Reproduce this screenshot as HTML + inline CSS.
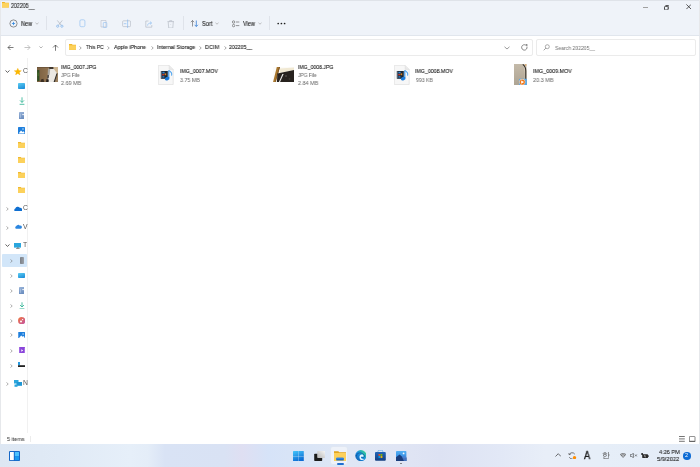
<!DOCTYPE html>
<html><head><meta charset="utf-8">
<style>
*{margin:0;padding:0;box-sizing:border-box}
html,body{width:700px;height:467px;overflow:hidden;background:#fff;font-family:"Liberation Sans",sans-serif;color:#1a1a1a}
.a{position:absolute}
.t{position:absolute;white-space:nowrap;font-size:6.2px;line-height:6.2px;transform:scaleX(0.86);transform-origin:0 0;will-change:transform;-webkit-text-stroke:0.1px currentColor}
#top{left:0;top:0;width:700px;height:35px;background:#eff3f9}
#win-l{left:0;top:0;width:1px;height:444px;background:#e6e8eb}
#win-r{left:699px;top:0;width:1px;height:444px;background:#e6e8eb}
#win-t{left:0;top:0;width:700px;height:1px;background:#dfe3e9}
.sep{position:absolute;width:1px;background:#dfe3ea}
.g{color:#6e6e6e;-webkit-text-stroke:0.05px currentColor}
#nav-b{left:27px;top:58px;width:1px;height:375px;background:#f1f1f1}
#taskbar{left:0;top:444px;width:700px;height:23px;background:linear-gradient(90deg,#dde7f3 0px,#e0eaf6 60px,#e6eff9 130px,#e4edf8 148px,#d9e3f5 165px,#d9e2f4 225px,#dfdff2 242px,#d6e3f8 268px,#dae5f6 310px,#dfe7f5 350px,#e0e5f4 400px,#dde2f3 440px,#e2e8f6 500px,#e8eef8 545px,#e6eef8 600px,#e4ecf7 700px)}
</style></head><body>
<div class="a" id="top"></div>
<div class="a" id="win-t"></div>
<div class="a" id="win-l"></div>
<div class="a" id="win-r"></div>
<div class="a" style="left:0;top:35px;width:700px;height:1px;background:#e1e6ed"></div>

<!-- title -->
<svg class="a" style="left:2.3px;top:2.3px" width="6.9" height="5.5" viewBox="0 0 6.9 5.5"><path d="M0 0h2.6l0.8 0.7h3.5V5.5H0z" fill="#efb42a"/><rect x="0" y="1.1" width="6.9" height="4.4" fill="#fdd35e"/></svg>
<div class="t" style="left:10.6px;top:2.9px;font-size:6.4px;line-height:6.4px;color:#222;transform:scaleX(0.83)">202205__</div>
<!-- window controls -->
<div class="a" style="left:642.5px;top:6.5px;width:5px;height:0.8px;background:#a0a0a0"></div>
<svg class="a" style="left:663.8px;top:4.5px" width="5.5" height="5.5" viewBox="0 0 5.5 5.5"><rect x="0.5" y="1.4" width="3.6" height="3.6" rx="0.8" fill="none" stroke="#333" stroke-width="0.9"/><path d="M1.5 0.5h2.6a0.9 0.9 0 0 1 0.9 0.9v2.6" fill="none" stroke="#333" stroke-width="0.8"/></svg>
<svg class="a" style="left:685.6px;top:4.4px" width="5.5" height="5.5" viewBox="0 0 5.5 5.5"><path d="M0.4 0.4L5.1 5.1M5.1 0.4L0.4 5.1" stroke="#2a2a2a" stroke-width="0.75"/></svg>

<!-- toolbar -->
<svg class="a" style="left:9.3px;top:18.8px" width="9" height="9" viewBox="0 0 9 9"><circle cx="4.5" cy="4.5" r="3.6" fill="none" stroke="#5a5a5a" stroke-width="0.65"/><path d="M4.5 2.9v3.2M2.9 4.5h3.2" stroke="#2f86e0" stroke-width="0.8"/></svg>
<div class="t" style="left:21.3px;top:20.7px;font-size:6.7px;line-height:6.7px;color:#222;transform:scaleX(0.83)">New</div>
<svg class="a" style="left:35px;top:22px" width="4" height="3" viewBox="0 0 4 3"><path d="M0.5 0.8L2 2.2L3.5 0.8" fill="none" stroke="#999" stroke-width="0.6"/></svg>
<div class="sep" style="left:46px;top:16px;height:14px"></div>
<!-- cut -->
<svg class="a" style="left:55.5px;top:19.6px" width="8" height="8" viewBox="0 0 8 8"><path d="M1.3 0.4L5.3 5.4M6.3 0.4L2.3 5.4" stroke="#a3a9b2" stroke-width="0.6" fill="none"/><circle cx="1.7" cy="6.2" r="1.1" fill="none" stroke="#7db2ea" stroke-width="0.7"/><circle cx="5.9" cy="6.2" r="1.1" fill="none" stroke="#7db2ea" stroke-width="0.7"/></svg>
<!-- copy -->
<svg class="a" style="left:78.5px;top:19.3px" width="7" height="8.5" viewBox="0 0 7 8.5"><rect x="0.9" y="0.8" width="5" height="6.9" rx="1.3" fill="none" stroke="#9fc8f2" stroke-width="0.8"/></svg>
<!-- paste -->
<svg class="a" style="left:100px;top:19px" width="8" height="9" viewBox="0 0 8 9"><path d="M1 1.5h5v6.5H1z" fill="none" stroke="#b8bec7" stroke-width="0.6"/><rect x="3.3" y="3.5" width="3.5" height="5" rx="0.6" fill="none" stroke="#8fbef0" stroke-width="0.6"/></svg>
<!-- rename -->
<svg class="a" style="left:121.5px;top:19px" width="9.5" height="9.5" viewBox="0 0 9.5 9.5"><rect x="0.6" y="1.8" width="8" height="5.8" rx="1" fill="none" stroke="#b3b9c2" stroke-width="0.65"/><path d="M5.6 0.5v8.5M1.8 4.7h2.6" stroke="#86b9ef" stroke-width="0.65"/></svg>
<!-- share -->
<svg class="a" style="left:144.6px;top:19.6px" width="8" height="8" viewBox="0 0 8 8"><path d="M3.5 1H0.8V7.2H6.8V5" fill="none" stroke="#b3b9c2" stroke-width="0.65"/><path d="M2.6 5.6C2.6 3.8 3.8 3 6.4 3M5 1.6L6.6 3L5 4.4" fill="none" stroke="#86b9ef" stroke-width="0.65"/></svg>
<!-- delete -->
<svg class="a" style="left:167px;top:19.6px" width="7.5" height="8.5" viewBox="0 0 7.5 8.5"><path d="M0.5 1.6h6.5M2.6 1.6V0.7h2.3v0.9M1.2 1.6l0.5 6.4h4.1L6.3 1.6" fill="none" stroke="#b3b9c2" stroke-width="0.65"/><circle cx="3.75" cy="4.6" r="0.45" fill="#c3c8cf"/></svg>
<div class="sep" style="left:183px;top:16px;height:14px"></div>
<!-- sort -->
<svg class="a" style="left:190px;top:19px" width="9" height="9" viewBox="0 0 9 9"><path d="M2.5 7.5V1.5M0.8 3.2L2.5 1.5L4.2 3.2" fill="none" stroke="#555" stroke-width="0.6"/><path d="M6.3 1.5v6M4.6 5.8l1.7 1.7L8 5.8" fill="none" stroke="#1d6fd0" stroke-width="0.7"/></svg>
<div class="t" style="left:201.6px;top:20.7px;font-size:6.7px;line-height:6.7px;color:#222;transform:scaleX(0.85)">Sort</div>
<svg class="a" style="left:215px;top:22px" width="4" height="3" viewBox="0 0 4 3"><path d="M0.5 0.8L2 2.2L3.5 0.8" fill="none" stroke="#999" stroke-width="0.6"/></svg>
<!-- view -->
<svg class="a" style="left:231.5px;top:19.5px" width="8" height="8" viewBox="0 0 8 8"><circle cx="1.6" cy="2" r="1.2" fill="none" stroke="#555" stroke-width="0.6"/><circle cx="1.6" cy="5.6" r="1.2" fill="none" stroke="#555" stroke-width="0.6"/><path d="M4 2h3.3M4 5.6h3.3" stroke="#555" stroke-width="0.6"/></svg>
<div class="t" style="left:242.5px;top:20.7px;font-size:6.7px;line-height:6.7px;color:#222;transform:scaleX(0.83)">View</div>
<svg class="a" style="left:257.5px;top:22px" width="4" height="3" viewBox="0 0 4 3"><path d="M0.5 0.8L2 2.2L3.5 0.8" fill="none" stroke="#999" stroke-width="0.6"/></svg>
<div class="sep" style="left:269px;top:16px;height:14px"></div>
<svg class="a" style="left:276.5px;top:22px" width="9" height="3" viewBox="0 0 9 3"><circle cx="1.2" cy="1.5" r="0.85" fill="#1e1e1e"/><circle cx="4.4" cy="1.5" r="0.85" fill="#1e1e1e"/><circle cx="7.6" cy="1.5" r="0.85" fill="#1e1e1e"/></svg>

<!-- address row -->
<svg class="a" style="left:7px;top:44px" width="7" height="7" viewBox="0 0 7 7"><path d="M6.5 3.5H1M3.5 1L1 3.5L3.5 6" fill="none" stroke="#444" stroke-width="0.7"/></svg>
<svg class="a" style="left:24px;top:44px" width="7" height="7" viewBox="0 0 7 7"><path d="M0.5 3.5H6M3.5 1L6 3.5L3.5 6" fill="none" stroke="#aaa" stroke-width="0.7"/></svg>
<svg class="a" style="left:38.8px;top:46px" width="4" height="2.6" viewBox="0 0 4 2.6"><path d="M0.4 0.4L2 2L3.6 0.4" fill="none" stroke="#777" stroke-width="0.55"/></svg>
<svg class="a" style="left:52px;top:44px" width="7" height="7" viewBox="0 0 7 7"><path d="M3.5 6.8V1M1 3.5L3.5 1L6 3.5" fill="none" stroke="#444" stroke-width="0.7"/></svg>
<div class="a" style="left:65px;top:39px;width:468px;height:17px;border:1px solid #ebebeb;border-radius:2px;background:#fff"></div>
<svg class="a" style="left:68.6px;top:44px" width="7.4" height="5.9" viewBox="0 0 7.4 5.9"><path d="M0 0h2.8l0.9 0.8h3.7V5.9H0z" fill="#f0b92e"/><rect x="0" y="1.3" width="7.4" height="4.6" fill="#fcd15b"/></svg>
<svg class="a" style="left:79.3px;top:45.5px" width="3" height="4" viewBox="0 0 3 4"><path d="M0.6 0.4L2.2 2L0.6 3.6" fill="none" stroke="#555" stroke-width="0.55"/></svg>
<div class="t" style="left:85.6px;top:44.00px;color:#222;transform:scaleX(0.801)">This PC</div>
<svg class="a" style="left:107.3px;top:45.5px" width="3" height="4" viewBox="0 0 3 4"><path d="M0.6 0.4L2.2 2L0.6 3.6" fill="none" stroke="#555" stroke-width="0.55"/></svg>
<div class="t" style="left:113.5px;top:44.00px;color:#222;transform:scaleX(0.870)">Apple iPhone</div>
<svg class="a" style="left:150.7px;top:45.5px" width="3" height="4" viewBox="0 0 3 4"><path d="M0.6 0.4L2.2 2L0.6 3.6" fill="none" stroke="#555" stroke-width="0.55"/></svg>
<div class="t" style="left:156.5px;top:44.00px;color:#222;transform:scaleX(0.870)">Internal Storage</div>
<svg class="a" style="left:199px;top:45.5px" width="3" height="4" viewBox="0 0 3 4"><path d="M0.6 0.4L2.2 2L0.6 3.6" fill="none" stroke="#555" stroke-width="0.55"/></svg>
<div class="t" style="left:205.3px;top:44.00px;color:#222;transform:scaleX(0.900)">DCIM</div>
<svg class="a" style="left:223.7px;top:45.5px" width="3" height="4" viewBox="0 0 3 4"><path d="M0.6 0.4L2.2 2L0.6 3.6" fill="none" stroke="#555" stroke-width="0.55"/></svg>
<div class="t" style="left:229.3px;top:44.00px;color:#222;transform:scaleX(0.840)">202205__</div>
<svg class="a" style="left:504px;top:45.5px" width="6" height="4" viewBox="0 0 6 4"><path d="M0.5 0.8L3 3L5.5 0.8" fill="none" stroke="#555" stroke-width="0.6"/></svg>
<svg class="a" style="left:520.5px;top:43.8px" width="7" height="7.2" viewBox="0 0 7 7.2"><path d="M4.85 1.2A2.7 2.7 0 1 0 5.95 2.75" fill="none" stroke="#4a4a4a" stroke-width="0.65"/><path d="M4.6 0.2L6.5 0.5L6.1 2.4z" fill="#4a4a4a"/></svg>
<div class="a" style="left:536px;top:39px;width:160px;height:17px;border:1px solid #ebebeb;border-radius:2px;background:#fff"></div>
<svg class="a" style="left:542.5px;top:44px" width="7" height="7" viewBox="0 0 7 7"><circle cx="4.3" cy="2.7" r="2" fill="none" stroke="#777" stroke-width="0.6"/><path d="M2.9 4.1L0.7 6.3" stroke="#777" stroke-width="0.7"/></svg>
<div class="t" style="left:555.3px;top:44.60px;color:#707070;transform:scaleX(0.820);-webkit-text-stroke:0">Search 202205__</div>

<!-- nav pane -->
<div class="a" id="nav-b"></div>
<!-- quick access -->
<svg class="a" style="left:5px;top:69.8px" width="5" height="3" viewBox="0 0 5 3"><path d="M0.5 0.5L2.5 2.4L4.5 0.5" fill="none" stroke="#444" stroke-width="0.85"/></svg>
<svg class="a" style="left:14.2px;top:67.8px" width="7.6" height="7.2" viewBox="0 0 8 7.4"><path d="M4 0.1L5.1 2.6L7.8 2.8L5.7 4.5L6.4 7.2L4 5.7L1.6 7.2L2.3 4.5L0.2 2.8L2.9 2.6z" fill="#fbb900" stroke="#f5a800" stroke-width="0.3" stroke-linejoin="round"/></svg>
<div class="t" style="left:22.5px;top:67.50px;color:#555;width:5px;overflow:hidden;font-size:6.8px;line-height:6.8px;transform:none;-webkit-text-stroke:0">C</div>
<!-- desktop -->
<div class="a" style="left:18px;top:83px;width:7px;height:6px;background:linear-gradient(160deg,#5ccdf2,#1788d6);border-radius:0.8px"></div>
<!-- downloads -->
<svg class="a" style="left:19px;top:97px" width="6" height="8" viewBox="0 0 6 8"><path d="M3 0.3V5.4M1 3.4L3 5.4L5 3.4M0.6 7.3H5.4" fill="none" stroke="#27b08f" stroke-width="0.8"/></svg>
<!-- documents -->
<svg class="a" style="left:18.8px;top:111.8px" width="5.5" height="7.3" viewBox="0 0 5.5 7.3"><defs><linearGradient id="dg111" x1="0" y1="0" x2="0.3" y2="1"><stop offset="0" stop-color="#98b3d8"/><stop offset="1" stop-color="#6d8fc0"/></linearGradient></defs><rect width="5.5" height="7.3" rx="0.4" fill="url(#dg111)"/><rect x="1.4" y="1.8" width="0.6" height="4" fill="#b9cde8"/><rect x="3.3" y="2" width="1.6" height="1.1" fill="#eef3fa"/></svg>
<!-- pictures -->
<svg class="a" style="left:18px;top:127px" width="7" height="7" viewBox="0 0 7 7"><rect width="7" height="7" rx="0.6" fill="#1f7fdc"/><path d="M0.6 6.4L3 3.6L4.6 5L5.5 4.2L6.4 5.2V6.4z" fill="#fff"/><circle cx="5" cy="2" r="0.8" fill="#bfe3ff"/></svg>
<!-- folders -->
<svg class="a" style="left:18px;top:142px" width="7.4" height="6.2" viewBox="0 0 7.4 6.2"><path d="M0 0h2.7l0.8 0.8h3.9V6.2H0z" fill="#f0b92e"/><rect y="1.2" width="7.4" height="5" fill="#fcd15b"/></svg>
<svg class="a" style="left:18px;top:157px" width="7.4" height="6.2" viewBox="0 0 7.4 6.2"><path d="M0 0h2.7l0.8 0.8h3.9V6.2H0z" fill="#f0b92e"/><rect y="1.2" width="7.4" height="5" fill="#fcd15b"/></svg>
<svg class="a" style="left:18px;top:172px" width="7.4" height="6.2" viewBox="0 0 7.4 6.2"><path d="M0 0h2.7l0.8 0.8h3.9V6.2H0z" fill="#f0b92e"/><rect y="1.2" width="7.4" height="5" fill="#fcd15b"/></svg>
<svg class="a" style="left:18px;top:186.6px" width="7.4" height="6.2" viewBox="0 0 7.4 6.2"><path d="M0 0h2.7l0.8 0.8h3.9V6.2H0z" fill="#f0b92e"/><rect y="1.2" width="7.4" height="5" fill="#fcd15b"/></svg>
<!-- onedrive 1 -->
<svg class="a" style="left:6px;top:207px" width="3" height="4" viewBox="0 0 3 4"><path d="M0.6 0.4L2.2 2L0.6 3.6" fill="none" stroke="#6f6f6f" stroke-width="0.6"/></svg>
<svg class="a" style="left:13.7px;top:205.5px" width="8.3" height="5.5" viewBox="0 0 8.3 5.5"><path d="M1.5 5.5A1.5 1.5 0 0 1 1.3 2.6A2.6 2.6 0 0 1 5.8 1.8A1.9 1.9 0 0 1 8.2 3.7A1.8 1.8 0 0 1 6.6 5.5z" fill="#0f6fd1"/></svg>
<div class="t" style="left:22.5px;top:205.00px;color:#555;width:5px;overflow:hidden;font-size:6.8px;line-height:6.8px;transform:none;-webkit-text-stroke:0">C</div>
<!-- onedrive 2 -->
<svg class="a" style="left:6px;top:225.5px" width="3" height="4" viewBox="0 0 3 4"><path d="M0.6 0.4L2.2 2L0.6 3.6" fill="none" stroke="#6f6f6f" stroke-width="0.6"/></svg>
<svg class="a" style="left:14.5px;top:224px" width="7" height="5" viewBox="0 0 8.3 5.5"><path d="M1.5 5.5A1.5 1.5 0 0 1 1.3 2.6A2.6 2.6 0 0 1 5.8 1.8A1.9 1.9 0 0 1 8.2 3.7A1.8 1.8 0 0 1 6.6 5.5z" fill="#2b86e0"/></svg>
<div class="t" style="left:22.5px;top:223.50px;color:#555;width:5px;overflow:hidden;font-size:6.8px;line-height:6.8px;transform:none;-webkit-text-stroke:0">V</div>
<!-- this pc -->
<svg class="a" style="left:5px;top:244.3px" width="5" height="3" viewBox="0 0 5 3"><path d="M0.5 0.5L2.5 2.4L4.5 0.5" fill="none" stroke="#444" stroke-width="0.85"/></svg>
<svg class="a" style="left:13.7px;top:242.8px" width="7.7" height="6" viewBox="0 0 7.7 6"><rect width="7.7" height="4.6" fill="#2aa6dd"/><rect x="3" y="4.6" width="1.7" height="0.8" fill="#555"/><rect x="2" y="5.3" width="3.7" height="0.7" fill="#777"/></svg>
<div class="t" style="left:22.5px;top:242.00px;color:#555;width:5px;overflow:hidden;font-size:6.8px;line-height:6.8px;transform:none;-webkit-text-stroke:0">T</div>
<!-- selected iphone -->
<div class="a" style="left:2px;top:254px;width:24.5px;height:12.5px;background:#d2e6f9;border-radius:1px"></div>
<svg class="a" style="left:9.5px;top:259px" width="3" height="4" viewBox="0 0 3 4"><path d="M0.6 0.4L2.2 2L0.6 3.6" fill="none" stroke="#6f6f6f" stroke-width="0.6"/></svg>
<div class="a" style="left:19.8px;top:256.5px;width:4px;height:7.7px;background:linear-gradient(90deg,#7a7f86,#9aa0a8);border-radius:0.8px"></div>
<!-- children -->
<svg class="a" style="left:9.5px;top:274px" width="3" height="4" viewBox="0 0 3 4"><path d="M0.6 0.4L2.2 2L0.6 3.6" fill="none" stroke="#6f6f6f" stroke-width="0.6"/></svg>
<div class="a" style="left:18px;top:273.2px;width:7.3px;height:5.2px;background:linear-gradient(160deg,#5ccdf2,#1788d6);border-radius:0.8px"></div>
<svg class="a" style="left:9.5px;top:288.5px" width="3" height="4" viewBox="0 0 3 4"><path d="M0.6 0.4L2.2 2L0.6 3.6" fill="none" stroke="#6f6f6f" stroke-width="0.6"/></svg>
<svg class="a" style="left:18.8px;top:287.2px" width="5.5" height="7.3" viewBox="0 0 5.5 7.3"><defs><linearGradient id="dg287" x1="0" y1="0" x2="0.3" y2="1"><stop offset="0" stop-color="#98b3d8"/><stop offset="1" stop-color="#6d8fc0"/></linearGradient></defs><rect width="5.5" height="7.3" rx="0.4" fill="url(#dg287)"/><rect x="1.4" y="1.8" width="0.6" height="4" fill="#b9cde8"/><rect x="3.3" y="2" width="1.6" height="1.1" fill="#eef3fa"/></svg>
<svg class="a" style="left:9.5px;top:303.5px" width="3" height="4" viewBox="0 0 3 4"><path d="M0.6 0.4L2.2 2L0.6 3.6" fill="none" stroke="#6f6f6f" stroke-width="0.6"/></svg>
<svg class="a" style="left:19px;top:301.8px" width="6" height="7.5" viewBox="0 0 6 7.5"><path d="M3 0.3V5M1 3L3 5L5 3M0.6 6.9H5.4" fill="none" stroke="#27b08f" stroke-width="0.8"/></svg>
<svg class="a" style="left:9.5px;top:318.5px" width="3" height="4" viewBox="0 0 3 4"><path d="M0.6 0.4L2.2 2L0.6 3.6" fill="none" stroke="#6f6f6f" stroke-width="0.6"/></svg>
<svg class="a" style="left:18px;top:317px" width="7.3" height="7.3" viewBox="0 0 7.3 7.3"><defs><linearGradient id="mg" x1="0" y1="0" x2="1" y2="1"><stop offset="0" stop-color="#f2793a"/><stop offset="1" stop-color="#c150a8"/></linearGradient></defs><circle cx="3.65" cy="3.65" r="3.65" fill="url(#mg)"/><circle cx="3" cy="4.6" r="1" fill="#fff"/><circle cx="4.6" cy="2.6" r="0.7" fill="#fff"/></svg>
<svg class="a" style="left:9.5px;top:333px" width="3" height="4" viewBox="0 0 3 4"><path d="M0.6 0.4L2.2 2L0.6 3.6" fill="none" stroke="#6f6f6f" stroke-width="0.6"/></svg>
<svg class="a" style="left:18px;top:331.7px" width="7.3" height="6.8" viewBox="0 0 7 7"><rect width="7" height="7" rx="0.6" fill="#1f7fdc"/><path d="M0.6 6.4L3 3.6L4.6 5L5.5 4.2L6.4 5.2V6.4z" fill="#fff"/><circle cx="5" cy="2" r="0.8" fill="#bfe3ff"/></svg>
<svg class="a" style="left:9.5px;top:348.5px" width="3" height="4" viewBox="0 0 3 4"><path d="M0.6 0.4L2.2 2L0.6 3.6" fill="none" stroke="#6f6f6f" stroke-width="0.6"/></svg>
<svg class="a" style="left:18.5px;top:346.6px" width="6.3" height="6.9" viewBox="0 0 6.3 6.9"><rect width="6.3" height="6.9" rx="0.6" fill="#8a45d9"/><rect x="0.5" y="0.6" width="0.6" height="5.7" fill="#b98af0"/><rect x="5.2" y="0.6" width="0.6" height="5.7" fill="#b98af0"/><path d="M2.3 2.2L4.2 3.45L2.3 4.7z" fill="#fff"/></svg>
<svg class="a" style="left:9.5px;top:363.5px" width="3" height="4" viewBox="0 0 3 4"><path d="M0.6 0.4L2.2 2L0.6 3.6" fill="none" stroke="#6f6f6f" stroke-width="0.6"/></svg>
<svg class="a" style="left:18px;top:361.5px" width="7.3" height="5.3" viewBox="0 0 7.3 5.3"><rect x="0" y="0" width="2" height="3" fill="#2a9be0"/><rect x="0" y="3.2" width="7.3" height="2.1" fill="#222"/></svg>
<!-- network -->
<svg class="a" style="left:6px;top:382px" width="3" height="4" viewBox="0 0 3 4"><path d="M0.6 0.4L2.2 2L0.6 3.6" fill="none" stroke="#6f6f6f" stroke-width="0.6"/></svg>
<svg class="a" style="left:14px;top:379.8px" width="8" height="6.8" viewBox="0 0 8 6.8"><rect x="0" y="0" width="4.5" height="3.5" fill="#2aa6dd"/><rect x="2.5" y="2" width="5.5" height="3.8" fill="#1e96d4"/><rect x="0.5" y="4.5" width="3" height="2.3" fill="#2aa6dd"/></svg>
<div class="t" style="left:22.5px;top:380.00px;color:#555;width:5px;overflow:hidden;font-size:6.8px;line-height:6.8px;transform:none;-webkit-text-stroke:0">N</div>

<!-- content items -->
<!-- 1 -->
<svg class="a" style="left:37px;top:67px" width="21" height="15" viewBox="0 0 21 15"><defs><linearGradient id="wd" x1="0" y1="0" x2="1" y2="0"><stop offset="0" stop-color="#7a5f40"/><stop offset="0.5" stop-color="#8f7250"/><stop offset="1" stop-color="#9a8060"/></linearGradient></defs><rect width="21" height="15" fill="url(#wd)"/><rect x="0" y="0" width="21" height="0.8" fill="#6a5238"/><rect x="0.2" y="3" width="2.2" height="11" fill="#2f4f25"/><rect x="0.6" y="5.5" width="1" height="3.5" fill="#4c7532"/><rect x="16" y="0" width="5" height="6" fill="#cdb591"/><path d="M12 1.5h4.5l3.5 4.8l-2.4 8.7H10.6l0.2-6z" fill="#ebe8e3"/><path d="M11 1.6l2.2 0.3l-0.6 6l-2 1.4z" fill="#a9a49c"/><rect x="12.2" y="0.3" width="4.3" height="1.6" fill="#2e2a26"/><path d="M19.6 6.2L20.4 6.8L17.8 15H16.6z" fill="#2a2622"/><path d="M10.5 8l1.5 0.2l-0.4 3l-1.3 0.3z" fill="#3a3430"/><path d="M4 12.4l2.4-0.6l0.8 3.2H3.6z" fill="#3b2e22"/><path d="M9.5 12l2.3 0.6l-0.2 2.4H9z" fill="#28221e"/></svg>
<div class="t" style="left:60.9px;top:63.70px;color:#161616;transform:scaleX(0.830)">IMG_0007.JPG</div>
<div class="t g" style="left:61.2px;top:72.10px;transform:scaleX(0.790)">JPG File</div>
<div class="t g" style="left:61px;top:80.20px;transform:scaleX(0.880)">2.69 MB</div>
<!-- 2 -->
<svg class="a" style="left:157.8px;top:64.8px" width="16" height="20.2" viewBox="0 0 16 20.2"><path d="M0.4 0.4H11.2L15.2 4.4V19.6H0.4z" fill="#f7f7f7" stroke="#dadada" stroke-width="0.6"/><path d="M11.2 0.4V4.4H15.2" fill="#e9e9e9" stroke="#dadada" stroke-width="0.5"/><rect x="2.8" y="6" width="7" height="7.8" fill="#1b2836"/><rect x="3.2" y="6.3" width="0.7" height="7.2" fill="#6b7d90"/><rect x="4.4" y="6.8" width="2.2" height="1.6" fill="#3a8ad6"/><rect x="4.2" y="9" width="1.8" height="1.4" fill="#c8342a"/><rect x="6.6" y="8.4" width="1.6" height="1.8" fill="#e0801c"/><rect x="4.4" y="11.2" width="2" height="1.4" fill="#2f7fc8"/><path d="M10.8 5.4V13" stroke="#1f86e2" stroke-width="1"/><path d="M10.8 5.5C12.8 6.5 14.3 8.3 13.5 10.6" fill="none" stroke="#58a9f0" stroke-width="1.1"/><ellipse cx="9.2" cy="13.6" rx="2.4" ry="1.8" transform="rotate(-20 9.2 13.6)" fill="#1a7ad8"/></svg>
<div class="t" style="left:179.5px;top:67.90px;color:#161616;transform:scaleX(0.849)">IMG_0007.MOV</div>
<div class="t g" style="left:179.7px;top:76.70px;transform:scaleX(0.860)">3.75 MB</div>
<!-- 3 -->
<svg class="a" style="left:273px;top:66.8px" width="21" height="15.2" viewBox="0 0 21 15.2"><rect width="21" height="15.2" fill="#fcfbf8"/><path d="M7 1.5L21 0.5V3L7 6z" fill="#f1e9d3"/><path d="M3.8 0h3.2L2.6 15.2H0z" fill="#a9782f"/><path d="M6 0h1L2.6 15.2H2z" fill="#7a5020"/><path d="M4.4 6.5L21 2.9V15.2H3.9z" fill="#27221e"/><path d="M9.4 7h1.2L7 15.2H5.8z" fill="#ecebe8"/><circle cx="13" cy="9" r="1.1" fill="#4a4440"/><circle cx="16.5" cy="12" r="0.9" fill="#3c3632"/></svg>
<div class="t" style="left:297.6px;top:63.70px;color:#161616;transform:scaleX(0.830)">IMG_0008.JPG</div>
<div class="t g" style="left:297.9px;top:72.10px;transform:scaleX(0.790)">JPG File</div>
<div class="t g" style="left:297.8px;top:80.20px;transform:scaleX(0.880)">2.84 MB</div>
<!-- 4 -->
<svg class="a" style="left:394.1px;top:64.8px" width="16" height="20.2" viewBox="0 0 16 20.2"><path d="M0.4 0.4H11.2L15.2 4.4V19.6H0.4z" fill="#f7f7f7" stroke="#dadada" stroke-width="0.6"/><path d="M11.2 0.4V4.4H15.2" fill="#e9e9e9" stroke="#dadada" stroke-width="0.5"/><rect x="2.8" y="6" width="7" height="7.8" fill="#1b2836"/><rect x="3.2" y="6.3" width="0.7" height="7.2" fill="#6b7d90"/><rect x="4.4" y="6.8" width="2.2" height="1.6" fill="#3a8ad6"/><rect x="4.2" y="9" width="1.8" height="1.4" fill="#c8342a"/><rect x="6.6" y="8.4" width="1.6" height="1.8" fill="#e0801c"/><rect x="4.4" y="11.2" width="2" height="1.4" fill="#2f7fc8"/><path d="M10.8 5.4V13" stroke="#1f86e2" stroke-width="1"/><path d="M10.8 5.5C12.8 6.5 14.3 8.3 13.5 10.6" fill="none" stroke="#58a9f0" stroke-width="1.1"/><ellipse cx="9.2" cy="13.6" rx="2.4" ry="1.8" transform="rotate(-20 9.2 13.6)" fill="#1a7ad8"/></svg>
<div class="t" style="left:415.4px;top:67.90px;color:#161616;transform:scaleX(0.849)">IMG_0008.MOV</div>
<div class="t g" style="left:415.6px;top:76.70px;transform:scaleX(0.830)">993 KB</div>
<!-- 5 -->
<svg class="a" style="left:513.8px;top:63.9px" width="13.4" height="21.4" viewBox="0 0 13.4 21.4"><defs><linearGradient id="bg5" x1="0" y1="0" x2="0" y2="1"><stop offset="0" stop-color="#c4baa9"/><stop offset="1" stop-color="#aea493"/></linearGradient></defs><rect width="12.4" height="21" fill="url(#bg5)"/><path d="M8.6 0h3.8v18h-1.8C11 12 11.2 5 8.6 0z" fill="#d9cfbf"/><path d="M8.8 0.4C11 2 11.8 4 11.8 7V17" fill="none" stroke="#2f2a24" stroke-width="1.1"/><rect x="11" y="0" width="1.4" height="2" fill="#d8b080"/><rect x="4.9" y="14.7" width="8.3" height="6.6" rx="1" fill="#62a9e0"/><circle cx="8.3" cy="18.1" r="3" fill="#fbe8d6"/><circle cx="8.3" cy="18.1" r="2.6" fill="#f07718"/><path d="M7.2 16.5L10.1 18.1L7.2 19.7z" fill="#fff"/></svg>
<div class="t" style="left:533.1px;top:67.90px;color:#161616;transform:scaleX(0.870)">IMG_0009.MOV</div>
<div class="t g" style="left:533.3px;top:76.70px;transform:scaleX(0.890)">20.3 MB</div>

<!-- status bar -->
<div class="t" style="left:6.8px;top:436.10px;color:#3a3a3a;transform:scaleX(0.880);-webkit-text-stroke:0.05px currentColor">5 items</div>
<div class="sep" style="left:30px;top:435.5px;height:6px;background:#ececec"></div>
<svg class="a" style="left:678.8px;top:436px" width="6" height="6" viewBox="0 0 6 6"><path d="M0 0.5h5.8M0 2.9h5.8M0 5.3h5.8" stroke="#5c5c5c" stroke-width="0.85"/></svg>
<svg class="a" style="left:689px;top:435.5px" width="6.5" height="6.5" viewBox="0 0 6.5 6.5"><rect x="0.4" y="0.4" width="5.6" height="5.6" rx="0.7" fill="none" stroke="#555" stroke-width="0.7"/><rect x="0.4" y="4.8" width="5.6" height="1.2" fill="#666"/></svg>

<!-- taskbar -->
<div class="a" id="taskbar"></div>
<!-- widgets -->
<svg class="a" style="left:9px;top:450.7px" width="11" height="10.1" viewBox="0 0 11 10.1"><rect width="11" height="10.1" rx="1" fill="#1668c7"/><rect x="1" y="1" width="3.8" height="8.1" fill="#fff"/><rect x="5.8" y="1" width="4.2" height="4" fill="#4cc2ff"/><rect x="5.8" y="5.1" width="4.2" height="4" fill="#1a9af0"/></svg>
<!-- start -->
<svg class="a" style="left:293.4px;top:450.6px" width="10.8" height="10.5" viewBox="0 0 10.8 10.5"><defs><linearGradient id="wg" x1="0" y1="0" x2="0.4" y2="1"><stop offset="0" stop-color="#46c6fa"/><stop offset="1" stop-color="#0b6cd4"/></linearGradient></defs><rect width="10.8" height="10.5" rx="0.5" fill="url(#wg)"/><rect x="5.1" y="0" width="0.6" height="10.5" fill="#dfe7f4" opacity="0.55"/><rect x="0" y="5" width="10.8" height="0.6" fill="#dfe7f4" opacity="0.55"/></svg>
<!-- task view -->
<svg class="a" style="left:313.8px;top:450.6px" width="11.5" height="10.2" viewBox="0 0 11.5 10.2"><defs><linearGradient id="tg" x1="1" y1="0" x2="0" y2="1"><stop offset="0" stop-color="#f6f6f6"/><stop offset="1" stop-color="#b5b5b5"/></linearGradient></defs><rect x="0.2" y="2.7" width="8" height="7.3" rx="0.7" fill="#1c1c1c"/><rect x="3.2" y="0.1" width="8.1" height="6.9" rx="0.7" fill="url(#tg)"/></svg>
<!-- explorer active -->
<div class="a" style="left:331.2px;top:447.2px;width:16px;height:17.2px;background:#eef2f9;border-radius:2px;box-shadow:0 0 0 0.5px #e3e8f0"></div>
<svg class="a" style="left:334.2px;top:450.8px" width="12" height="10.6" viewBox="0 0 12 10.6"><path d="M0 0.3h4.3l1 1H12V10.6H0z" fill="#e0a21a"/><rect x="0" y="1.9" width="12" height="8.7" fill="#fdd05a"/><rect x="2.2" y="6.7" width="7.6" height="2.9" rx="0.9" fill="#1a6fd0"/><rect x="2.2" y="6.7" width="7.6" height="1.1" rx="0.5" fill="#3c8ee6"/></svg>
<div class="a" style="left:336.6px;top:463.2px;width:7.4px;height:1.8px;background:#1f6fd0;border-radius:1px"></div>
<!-- edge -->
<svg class="a" style="left:354.6px;top:450.1px" width="11.8" height="11.2" viewBox="0 0 11.8 11.2"><defs><linearGradient id="eg" x1="0" y1="1" x2="1" y2="0"><stop offset="0" stop-color="#0d56a8"/><stop offset="0.5" stop-color="#1a8fe0"/><stop offset="0.8" stop-color="#2fc3a0"/><stop offset="1" stop-color="#5fdc5a"/></linearGradient></defs><circle cx="5.9" cy="5.6" r="5.6" fill="url(#eg)"/><path d="M1 6.5C1.5 3.5 4 2.5 6 3s3.5 1.8 3.5 3.2c0 0.9-0.9 1.2-2 1.1C6 7.2 5.2 6.8 5.6 6" fill="none" stroke="#0a3f86" stroke-width="0.9" opacity="0.6"/><path d="M4.5 6.8c0-1.5 1-2.4 2.2-2.4c1.1 0 1.9 0.7 1.9 1.5c0 0.6-0.6 0.8-1.3 0.8c-1 0-1.4-0.3-1.3 0.6c0.1 1.2 1.4 2 3.3 1.6c-0.9 1-2.5 1.3-3.6 0.8c-0.9-0.5-1.2-1.3-1.2-2.9z" fill="#e9f6ff"/></svg>
<!-- store -->
<svg class="a" style="left:375.3px;top:450.4px" width="10.8" height="10.8" viewBox="0 0 10.8 10.8"><defs><linearGradient id="sg" x1="0" y1="0" x2="0" y2="1"><stop offset="0" stop-color="#2366b8"/><stop offset="1" stop-color="#143f80"/></linearGradient></defs><path d="M3 2.2V1.3C3 0.6 3.5 0.2 4.2 0.2h2.4c0.7 0 1.2 0.4 1.2 1.1v0.9" fill="none" stroke="#6db4ee" stroke-width="0.9"/><rect x="0" y="2" width="10.8" height="8.8" rx="1" fill="url(#sg)"/><rect x="3.5" y="4" width="1.8" height="1.8" fill="#f25022"/><rect x="5.6" y="4" width="1.8" height="1.8" fill="#7fba00"/><rect x="3.5" y="6.1" width="1.8" height="1.8" fill="#00a4ef"/><rect x="5.6" y="6.1" width="1.8" height="1.8" fill="#ffb900"/></svg>
<!-- photos -->
<svg class="a" style="left:396.2px;top:450.8px" width="10.4" height="10.2" viewBox="0 0 10.4 10.2"><defs><linearGradient id="pg" x1="0" y1="0" x2="0" y2="1"><stop offset="0" stop-color="#52b0f4"/><stop offset="1" stop-color="#2477d8"/></linearGradient></defs><rect width="10.4" height="10.2" rx="0.8" fill="url(#pg)"/><path d="M0 10.2V6.3L3.6 3.6L8 7.6L10.4 6.4V10.2z" fill="#1a3d7c"/><path d="M6 6L8 4.6L10.4 6.4V10.2H8z" fill="#4f7fd0" opacity="0.8"/><circle cx="7.6" cy="2.4" r="0.9" fill="#f4fbff"/></svg>
<div class="a" style="left:400px;top:463px;width:2px;height:1.2px;background:#777;border-radius:1px"></div>
<!-- tray -->
<svg class="a" style="left:554.7px;top:453px" width="6.5" height="4" viewBox="0 0 6.5 4"><path d="M0.5 3.5L3.25 0.7L6 3.5" fill="none" stroke="#333" stroke-width="0.7"/></svg>
<svg class="a" style="left:568.2px;top:451.6px" width="8.5" height="7.6" viewBox="0 0 8.5 7.6"><path d="M6.8 2.2A3.2 3.2 0 0 0 1.2 2.6M0.8 1.2L1.2 2.6L2.6 2.4M1.3 5.2A3.2 3.2 0 0 0 4.6 7" fill="none" stroke="#4a4a4a" stroke-width="0.75"/><circle cx="6.5" cy="5.6" r="1.7" fill="#ff8c00"/></svg>
<div class="t" style="left:583.9px;top:450.9px;font-size:10px;line-height:10px;color:#1e1e1e;letter-spacing:0;transform:scaleX(0.92);-webkit-text-stroke:0.35px currentColor">A</div>
<div class="t" style="left:601.6px;top:451.9px;font-size:7.6px;line-height:8.6px;color:#505050;letter-spacing:0;transform:none;-webkit-text-stroke:0">한</div>
<svg class="a" style="left:619.8px;top:453.2px" width="6.2" height="4.8" viewBox="0 0 6.2 4.8"><path d="M0.3 1.4A4.2 4.2 0 0 1 5.9 1.4L3.1 4.5z" fill="#c9ccd2" stroke="#3a3a3a" stroke-width="0.55" stroke-linejoin="round"/><path d="M1.3 2.5A2.6 2.6 0 0 1 4.9 2.5" fill="none" stroke="#3a3a3a" stroke-width="0.5"/></svg>
<svg class="a" style="left:630px;top:453px" width="7.5" height="5" viewBox="0 0 7.5 5"><path d="M0.4 1.5h1.3L3.4 0.3v4.4L1.7 3.5H0.4z" fill="none" stroke="#3a3a3a" stroke-width="0.6" stroke-linejoin="round"/><path d="M5 1.5l1.8 1.9M6.8 1.5L5 3.4" stroke="#3a3a3a" stroke-width="0.6"/></svg>
<svg class="a" style="left:641.2px;top:452.8px" width="8" height="5.2" viewBox="0 0 8 5.2"><rect x="1.2" y="1.3" width="5.8" height="3.6" rx="0.4" fill="#2a2a2a"/><rect x="7" y="2.4" width="0.8" height="1.4" fill="#2a2a2a"/><circle cx="1.1" cy="1.1" r="1" fill="#1a1a1a"/><path d="M3 2.2L4.6 3.1L3.4 3.3L4.8 4.2" stroke="#e8e8e8" stroke-width="0.45" fill="none"/></svg>
<div class="t" style="left:659.2px;top:448.90px;color:#222;transform:scaleX(0.900)">4:26 PM</div>
<div class="t" style="left:656.7px;top:455.80px;color:#222;transform:scaleX(0.920)">5/9/2022</div>
<div class="a" style="left:683px;top:452px;width:7.5px;height:7.5px;border-radius:50%;background:#0f6cd4"></div>
<div class="t" style="left:685.2px;top:452.3px;font-size:5.5px;color:#fff;letter-spacing:0;transform:none;-webkit-text-stroke:0">2</div>
</body></html>
